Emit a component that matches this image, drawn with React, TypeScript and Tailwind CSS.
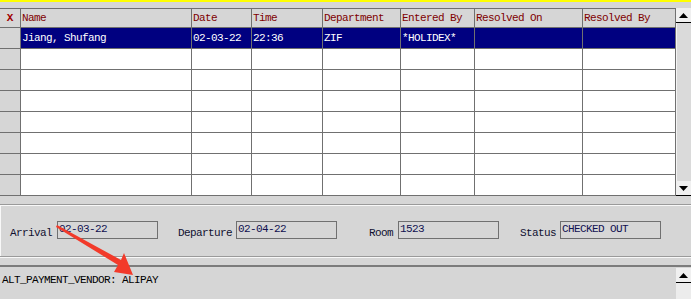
import * as React from "react";

const mono = { fontFamily: '"Liberation Mono", "DejaVu Sans Mono", monospace' };

const columns = [
  { label: "Name", w: "w-[171px]" },
  { label: "Date", w: "w-[60px]" },
  { label: "Time", w: "w-[71px]" },
  { label: "Department", w: "w-[78px]" },
  { label: "Entered By", w: "w-[74px]" },
  { label: "Resolved On", w: "w-[108px]" },
  { label: "Resolved By", w: "w-[93px]" },
];

const firstRow = ["Jiang, Shufang", "02-03-22", "22:36", "ZIF", "*HOLIDEX*", "", ""];

function Arrow({ up }: { up?: boolean }) {
  return (
    <div className="flex h-[15px] w-[15px] items-center justify-center border-b border-black bg-[#f0f0f0]">
      <svg width="9" height="5" viewBox="0 0 9 5">
        <polygon points={up ? "4.5,0 9,5 0,5" : "0,0 9,0 4.5,5"} fill="#000" />
      </svg>
    </div>
  );
}

function Field({ label, value, gap }: { label: string; value: string; gap: string }) {
  return (
    <div className={`flex items-start ${gap}`}>
      <span className="mt-[4px] text-[11px] tracking-[-0.6px] text-[#101030]">{label}</span>
      <div className="h-[18px] w-[101px] border border-[#707070] px-[1px] text-[11px] leading-[15px] tracking-[-0.6px] text-[#101050]">
        {value}
      </div>
    </div>
  );
}

export default function App() {
  const emptyRows = Array.from({ length: 7 });

  return (
    <div className="relative flex h-[299px] w-[691px] flex-col overflow-hidden bg-[#d6d6d6]" style={mono}>
      <div className="h-[2px] bg-[#ffff00]" />
      <div className="h-[6px]" />

      {/* grid */}
      <div className="flex h-[188px]">
        <div className="flex w-[676px] flex-col border-t border-[#707070]">
          <div className="flex h-[19px] border-b border-[#707070] bg-[#d6d6d6]">
            <div className="flex w-[21px] items-center justify-center border-r border-[#707070] text-[11px] font-bold text-[#a00000]">
              X
            </div>
            {columns.map((c) => (
              <div
                key={c.label}
                className={`${c.w} flex items-center border-r border-[#707070] pl-[1px] text-[11px] tracking-[-0.6px] text-[#800000]`}
              >
                {c.label}
              </div>
            ))}
          </div>
          <div className="flex h-[21px] border-b border-[#707070]">
            <div className="w-[21px] border-r border-[#707070] bg-[#d6d6d6]" />
            {columns.map((c, i) => (
              <div
                key={c.label}
                className={`${c.w} flex items-center border-r border-[#707070] bg-[#000080] pl-[1px] text-[11px] tracking-[-0.6px] text-white`}
              >
                {firstRow[i]}
              </div>
            ))}
          </div>
          {emptyRows.map((_, r) => (
            <div key={r} className="flex h-[21px] border-b border-[#707070]">
              <div className="w-[21px] border-r border-[#707070] bg-[#d6d6d6]" />
              {columns.map((c) => (
                <div key={c.label} className={`${c.w} border-r border-[#707070] bg-white`} />
              ))}
            </div>
          ))}
        </div>
        <div className="flex w-[15px] flex-col bg-[#dadada]">
          <Arrow up />
          <div className="flex-1 border-l border-[#f4f4f4]" />
          <Arrow />
        </div>
      </div>

      <div className="h-[8px]" />

      {/* booking details */}
      <div className="flex h-[53px] items-start border-t border-b border-t-[#9a9a9a] border-b-[#9a9a9a] shadow-[inset_1px_1px_0_#f8f8f8,0_1px_0_#f8f8f8]">
        <div className="mt-[16px] flex w-full pl-[10px]">
          <Field label="Arrival" value="02-03-22" gap="gap-[5px]" />
          <div className="w-[20px]" />
          <Field label="Departure" value="02-04-22" gap="gap-[4px]" />
          <div className="w-[32px]" />
          <Field label="Room" value="1523" gap="gap-[5px]" />
          <div className="w-[21px]" />
          <Field label="Status" value="CHECKED OUT" gap="gap-[4px]" />
        </div>
      </div>

      <div className="h-[8px]" />

      {/* message */}
      <div className="flex flex-1 border-t-2 border-[#7c7c7c]">
        <div className="flex-1 pl-[2px] pt-[5px] text-[11px] tracking-[-0.6px] text-black">
          ALT_PAYMENT_VENDOR: ALIPAY
        </div>
        <div className="mt-[1px] flex w-[15px] flex-col bg-[#dadada]">
          <Arrow up />
          <div className="flex-1 bg-[#ececec]" />
        </div>
      </div>

      <svg className="pointer-events-none absolute left-0 top-0" width="691" height="299" viewBox="0 0 691 299">
        <polygon
          points="57,225 121,260 124,253 133,275 114,272 118,265 56,227"
          fill="#f23a2a"
        />
      </svg>
    </div>
  );
}
